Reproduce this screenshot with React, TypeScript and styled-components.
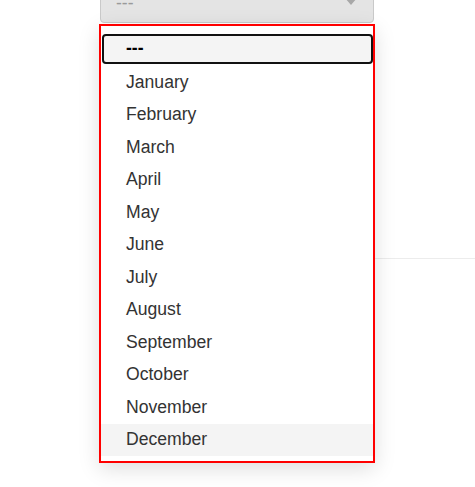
import React from "react";
import styled, { createGlobalStyle } from "styled-components";

const Global = createGlobalStyle`
  html, body { margin: 0; padding: 0; background: #ffffff; }
  body { font-family: "Liberation Sans", Arial, sans-serif; }
`;

const Page = styled.div`
  position: relative;
  width: 475px;
  height: 487px;
  overflow: hidden;
  background: #ffffff;
`;

const SelectField = styled.div`
  box-sizing: border-box;
  margin: -17px 0 0 100px;
  width: 274px;
  height: 40px;
  background: #e4e4e4;
  border: 1px solid #c9c9c9;
  border-radius: 4px;
  display: flex;
  align-items: center;
  justify-content: space-between;
  padding: 0 16px 0 15px;
  color: #9a9a9a;
  font-size: 17.6px;
`;

const Caret = styled.span`
  width: 0;
  height: 0;
  border-left: 6px solid transparent;
  border-right: 6px solid transparent;
  border-top: 7px solid #a8a8a8;
  margin-top: -4px;
`;

const Divider = styled.hr`
  margin: 235px 0 0 100px;
  border: 0;
  height: 1px;
  background: #ececec;
`;

const Menu = styled.ul`
  position: absolute;
  top: 24px;
  left: 99px;
  box-sizing: border-box;
  width: 276px;
  margin: 0;
  padding: 7.5px 0 5px;
  list-style: none;
  background: #ffffff;
  border: 2px solid #ff0000;
  box-shadow: 0 6px 20px rgba(0, 0, 0, 0.13);
`;

const Item = styled.li<{ $focused?: boolean; $hover?: boolean }>`
  box-sizing: border-box;
  display: flex;
  align-items: center;
  height: ${(p) => (p.$focused ? "30px" : "32.5px")};
  margin: ${(p) => (p.$focused ? "0 0 2.5px 1px" : "0")};
  padding-left: ${(p) => (p.$focused ? "22px" : "25px")};
  font-size: 17.6px;
  font-weight: ${(p) => (p.$focused ? 700 : 400)};
  color: ${(p) => (p.$focused ? "#000000" : "#333333")};
  background: ${(p) => (p.$focused || p.$hover ? "#f4f4f4" : "transparent")};
  border: ${(p) => (p.$focused ? "2px solid #111111" : "0")};
  border-radius: ${(p) => (p.$focused ? "4px" : "0")};
`;

const months = [
  "January",
  "February",
  "March",
  "April",
  "May",
  "June",
  "July",
  "August",
  "September",
  "October",
  "November",
  "December",
];

export default function App() {
  return (
    <Page>
      <Global />
      <SelectField>
        <span>---</span>
        <Caret />
      </SelectField>
      <Divider />
      <Menu role="listbox">
        <Item $focused>---</Item>
        {months.map((m) => (
          <Item key={m} $hover={m === "December"}>
            {m}
          </Item>
        ))}
      </Menu>
    </Page>
  );
}
